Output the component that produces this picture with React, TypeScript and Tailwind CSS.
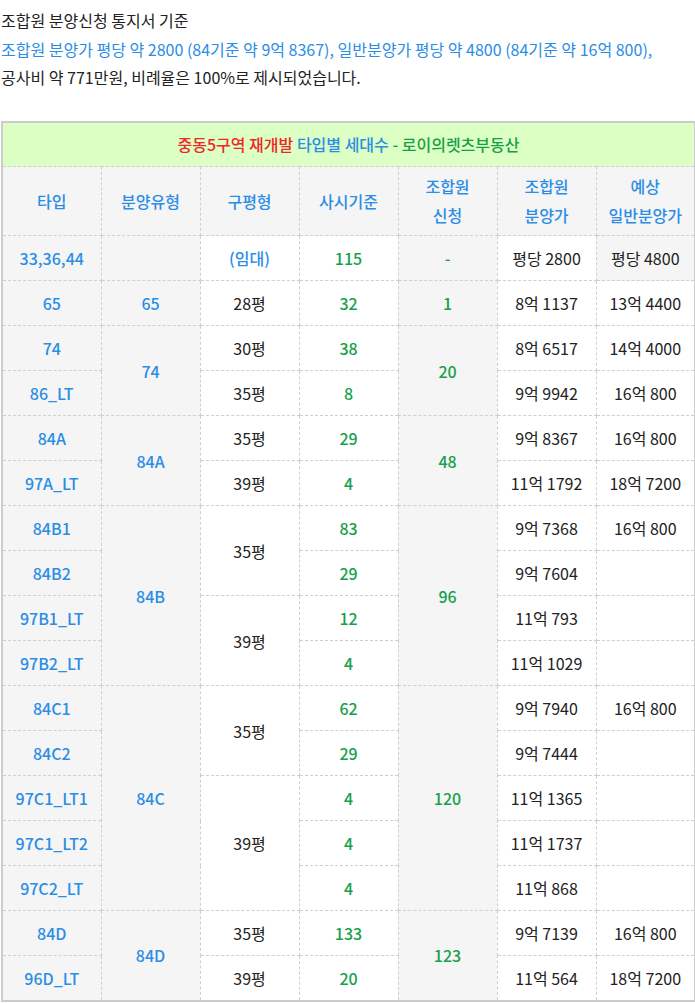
import type { ReactNode } from 'react'

const BLUE = 'text-[#2b8de6]'
const GREEN = 'text-[#17a04b]'

type Tone = 'blue' | 'green' | 'black'

function Td({
  children,
  tone = 'black',
  gray,
  rs,
}: {
  children?: ReactNode
  tone?: Tone
  gray?: boolean
  rs?: number
}) {
  const color = tone === 'blue' ? BLUE + ' font-medium' : tone === 'green' ? GREEN + ' font-medium' : 'text-[#222]'
  return (
    <td
      rowSpan={rs}
      className={`h-[45px] border border-dashed border-[#cfcfcf] p-0 text-center align-middle ${color} ${gray ? 'bg-[#f5f5f5]' : 'bg-white'}`}
    >
      {children}
    </td>
  )
}

function Th({ children }: { children: ReactNode }) {
  return (
    <th className={`h-[69px] border border-dashed border-[#cfcfcf] bg-[#f5f5f5] p-0 text-center align-middle font-medium leading-[29px] ${BLUE}`}>
      {children}
    </th>
  )
}

export default function App() {
  return (
    <div
      className="min-h-screen bg-white pl-px pt-[6px] text-[16px] text-[#222]"
      style={{ fontFamily: '"Noto Sans CJK KR", "Noto Sans", sans-serif' }}
    >
      <div className="leading-[28.5px]">
        <p>조합원 분양신청 통지서 기준</p>
        <p className={BLUE}>
          조합원 분양가 평당 약 2800 (84기준 약 9억 8367), 일반분양가 평당 약 4800 (84기준 약 16억 800),
        </p>
        <p>공사비 약 771만원, 비례율은 100%로 제시되었습니다.</p>
      </div>

      <table className="mt-[29px] w-[693px] table-fixed border-collapse border-2 border-solid border-[#cccccc]">
        <colgroup>
          <col className="w-[99px]" />
          <col className="w-[99px]" />
          <col className="w-[99px]" />
          <col className="w-[99px]" />
          <col className="w-[99px]" />
          <col className="w-[99px]" />
          <col className="w-[99px]" />
        </colgroup>
        <thead>
          <tr>
            <th
              colSpan={7}
              className="h-[45px] border border-dashed border-[#cfcfcf] bg-[#dcffc3] p-0 text-center align-middle font-medium"
            >
              <span className="text-[#f0262b]">중동5구역 재개발 </span>
              <span className={BLUE}>타입별 세대수 </span>
              <span className={GREEN}>- 로이의렛츠부동산</span>
            </th>
          </tr>
          <tr>
            <Th>타입</Th>
            <Th>분양유형</Th>
            <Th>구평형</Th>
            <Th>사시기준</Th>
            <Th>
              조합원
              <br />
              신청
            </Th>
            <Th>
              조합원
              <br />
              분양가
            </Th>
            <Th>
              예상
              <br />
              일반분양가
            </Th>
          </tr>
        </thead>
        <tbody>
          <tr>
            <Td tone="blue" gray>33,36,44</Td>
            <Td gray />
            <Td tone="blue">(임대)</Td>
            <Td tone="green">115</Td>
            <Td tone="green" gray>-</Td>
            <Td>평당 2800</Td>
            <Td gray>평당 4800</Td>
          </tr>
          <tr>
            <Td tone="blue" gray>65</Td>
            <Td tone="blue" gray>65</Td>
            <Td>28평</Td>
            <Td tone="green">32</Td>
            <Td tone="green" gray>1</Td>
            <Td>8억 1137</Td>
            <Td>13억 4400</Td>
          </tr>
          <tr>
            <Td tone="blue" gray>74</Td>
            <Td tone="blue" gray rs={2}>74</Td>
            <Td>30평</Td>
            <Td tone="green">38</Td>
            <Td tone="green" gray rs={2}>20</Td>
            <Td>8억 6517</Td>
            <Td>14억 4000</Td>
          </tr>
          <tr>
            <Td tone="blue" gray>86_LT</Td>
            <Td>35평</Td>
            <Td tone="green">8</Td>
            <Td>9억 9942</Td>
            <Td>16억 800</Td>
          </tr>
          <tr>
            <Td tone="blue" gray>84A</Td>
            <Td tone="blue" gray rs={2}>84A</Td>
            <Td>35평</Td>
            <Td tone="green">29</Td>
            <Td tone="green" gray rs={2}>48</Td>
            <Td>9억 8367</Td>
            <Td>16억 800</Td>
          </tr>
          <tr>
            <Td tone="blue" gray>97A_LT</Td>
            <Td>39평</Td>
            <Td tone="green">4</Td>
            <Td>11억 1792</Td>
            <Td>18억 7200</Td>
          </tr>
          <tr>
            <Td tone="blue" gray>84B1</Td>
            <Td tone="blue" gray rs={4}>84B</Td>
            <Td rs={2}>35평</Td>
            <Td tone="green">83</Td>
            <Td tone="green" gray rs={4}>96</Td>
            <Td>9억 7368</Td>
            <Td>16억 800</Td>
          </tr>
          <tr>
            <Td tone="blue" gray>84B2</Td>
            <Td tone="green">29</Td>
            <Td>9억 7604</Td>
            <Td />
          </tr>
          <tr>
            <Td tone="blue" gray>97B1_LT</Td>
            <Td rs={2}>39평</Td>
            <Td tone="green">12</Td>
            <Td>11억 793</Td>
            <Td />
          </tr>
          <tr>
            <Td tone="blue" gray>97B2_LT</Td>
            <Td tone="green">4</Td>
            <Td>11억 1029</Td>
            <Td />
          </tr>
          <tr>
            <Td tone="blue" gray>84C1</Td>
            <Td tone="blue" gray rs={5}>84C</Td>
            <Td rs={2}>35평</Td>
            <Td tone="green">62</Td>
            <Td tone="green" gray rs={5}>120</Td>
            <Td>9억 7940</Td>
            <Td>16억 800</Td>
          </tr>
          <tr>
            <Td tone="blue" gray>84C2</Td>
            <Td tone="green">29</Td>
            <Td>9억 7444</Td>
            <Td />
          </tr>
          <tr>
            <Td tone="blue" gray>97C1_LT1</Td>
            <Td rs={3}>39평</Td>
            <Td tone="green">4</Td>
            <Td>11억 1365</Td>
            <Td />
          </tr>
          <tr>
            <Td tone="blue" gray>97C1_LT2</Td>
            <Td tone="green">4</Td>
            <Td>11억 1737</Td>
            <Td />
          </tr>
          <tr>
            <Td tone="blue" gray>97C2_LT</Td>
            <Td tone="green">4</Td>
            <Td>11억 868</Td>
            <Td />
          </tr>
          <tr>
            <Td tone="blue" gray>84D</Td>
            <Td tone="blue" gray rs={2}>84D</Td>
            <Td>35평</Td>
            <Td tone="green">133</Td>
            <Td tone="green" gray rs={2}>123</Td>
            <Td>9억 7139</Td>
            <Td>16억 800</Td>
          </tr>
          <tr>
            <Td tone="blue" gray>96D_LT</Td>
            <Td>39평</Td>
            <Td tone="green">20</Td>
            <Td>11억 564</Td>
            <Td>18억 7200</Td>
          </tr>
        </tbody>
      </table>
    </div>
  )
}
